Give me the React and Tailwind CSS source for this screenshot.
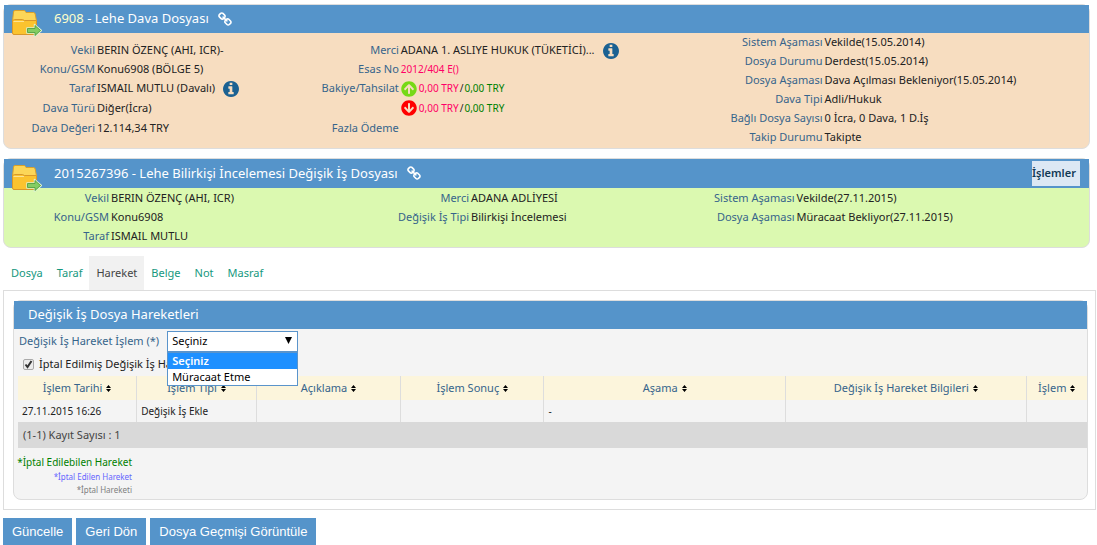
import React, { useState } from "react";
import { FaArrowCircleDown, FaArrowCircleUp } from "react-icons/fa";

const ChainIcon = () => (
  <svg className="size-[15px] shrink-0" viewBox="0 0 1792 1792" fill="currentColor">
    <path d="M1456 1216q0-40-28-68l-208-208q-28-28-68-28-42 0-72 32 3 3 19 18.5t21.5 21.5 15 19 13 25.5 3.5 27.5q0 40-28 68t-68 28q-15 0-27.5-3.5t-25.5-13-19-15-21.5-21.5-18.5-19q-33 31-33 73 0 40 28 68l206 207q27 27 68 27 40 0 68-26l147-146q28-28 28-67zm-703-705q0-40-28-68l-206-207q-28-28-68-28-39 0-68 27l-147 146q-28 28-28 67 0 40 28 68l208 208q27 27 68 27 42 0 72-31-3-3-19-18.5t-21.5-21.5-15-19-13-25.5-3.5-27.5q0-40 28-68t68-28q15 0 27.5 3.5t25.5 13 19 15 21.5 21.5 18.5 19q33-31 33-73zm895 705q0 120-85 203l-147 146q-83 83-203 83-121 0-204-85l-206-207q-83-83-83-203 0-123 88-209l-88-88q-86 88-208 88-120 0-204-84l-208-208q-84-84-84-204t85-203l147-146q83-83 203-83 121 0 204 85l206 207q83 83 83 203 0 123-88 209l88 88q86-88 208-88 120 0 204 84l208 208q84 84 84 204z" />
  </svg>
);

const InfoIcon = () => (
  <svg
    className="size-4 shrink-0 text-[#1b6192]"
    viewBox="128 128 1536 1536"
    fill="currentColor"
  >
    <path d="M1152 1376v-160q0-14-9-23t-23-9h-96v-512q0-14-9-23t-23-9h-320q-14 0-23 9t-9 23v160q0 14 9 23t23 9h96v320h-96q-14 0-23 9t-9 23v160q0 14 9 23t23 9h448q14 0 23-9t9-23zm-128-896v-160q0-14-9-23t-23-9h-192q-14 0-23 9t-9 23v160q0 14 9 23t23 9h192q14 0 23-9t9-23zm640 416q0 209-103 385.5t-279.5 279.5-385.5 103-385.5-103-279.5-279.5-103-385.5 103-385.5 279.5-279.5 385.5-103 385.5 103 279.5 279.5 103 385.5z" />
  </svg>
);

const FolderIcon = () => (
  <svg className="h-7 w-8 shrink-0" viewBox="0 0 32 28">
    <path
      d="M3.500 3q0-1.500 1.500-1.500h9q1 0 1.500 1l.5 1h7.500q1.500 0 1.700 1.500l1.300 7h-24z"
      fill="#fcd658"
      stroke="#d9a02a"
    />
    <path d="M2.500 11.500l2-1h8l2 1h12V24q0 1.500-1.500 1.500H4Q2.500 25.500 2.500 24z" fill="#fbc32f" stroke="#d9982a" />
    <path d="M3.500 12.500h10.500" stroke="#fde293" />
    <path
      d="M17 19h7.500v-3.500l7 6-7 6V24H17z"
      fill="#72c04e"
      stroke="#dcefcf"
      strokeWidth="1.500"
      strokeLinejoin="round"
    />
    <path
      d="M17.500 19.500H25v-3l5.500 5-5.500 5v-3h-7.500z"
      fill="#84cd62"
      stroke="#4b9a38"
      strokeWidth=".8"
      strokeLinejoin="round"
    />
  </svg>
);

const SortIcon = () => (
  <svg className="ml-1 inline-block h-[7px] w-[5px] text-black" viewBox="0 0 5 7" fill="currentColor">
    <path d="M2.500 0L5 3H0zM0 4h5L2.500 7z" />
  </svg>
);

const Amounts = ({ icon }) => (
  <span className="flex items-center gap-px text-[10px]">
    {icon}
    <span className="ml-px text-[#ff0066]">0,00 TRY</span>
    <span>/</span>
    <span className="text-[#008000]">0,00 TRY</span>
  </span>
);

const Column = ({ rows, labelWidth, className = "" }) => (
  <dl className={`whitespace-nowrap ${className}`}>
    {rows.map(([label, value, height = "h-[19px]"], i) => (
      <div key={i} className={`flex items-center gap-0.5 ${height}`}>
        <dt className={`shrink-0 text-right text-[#36648b] ${labelWidth}`}>{label}</dt>
        <dd className="flex items-center">{value}</dd>
      </div>
    ))}
  </dl>
);

const FileCard = ({ number, title, numberColor, height, color, action, children }) => (
  <section className={`mr-[6px] rounded-lg border border-[#ddd] ${color}`}>
    <header className={`flex items-center bg-[#5594ca] pl-[6px] pr-[9px] text-white ${height}`}>
      <div className="h-5">
        <FolderIcon />
      </div>
      <h2 className="ml-3 mr-[9px] text-[13px]">
        <span className={numberColor}>{number}</span> - {title}
      </h2>
      <ChainIcon />
      {action}
    </header>
    {children}
  </section>
);

const caseFile = [
  [
    ["Vekil", "BERIN ÖZENÇ (AHI, ICR)-"],
    ["Konu/GSM", "Konu6908 (BÖLGE 5)"],
    ["Taraf", <>ISMAIL MUTLU (Davalı) <span className="ml-2"><InfoIcon /></span></>],
    ["Dava Türü", "Diğer(İcra)", "h-5"],
    ["Dava Değeri", "12.114,34 TRY", "h-5"]
  ],
  [
    ["Merci", <>ADANA 1. ASLIYE HUKUK (TÜKETİCİ)... <span className="ml-2"><InfoIcon /></span></>],
    ["Esas No", <span className="text-[10px] text-[#ff0066]">2012/404 E()</span>],
    ["Bakiye/Tahsilat", <Amounts icon={<FaArrowCircleUp className="size-4 text-[#76d916]" />} />],
    ["", <Amounts icon={<FaArrowCircleDown className="size-4 text-[#ff0000]" />} />, "h-5"],
    ["Fazla Ödeme", "", "h-5"]
  ],
  [
    ["Sistem Aşaması", "Vekilde(15.05.2014)"],
    ["Dosya Durumu", "Derdest(15.05.2014)"],
    ["Dosya Aşaması", "Dava Açılması Bekleniyor(15.05.2014)"],
    ["Dava Tipi", "Adli/Hukuk"],
    ["Bağlı Dosya Sayısı", "0 İcra, 0 Dava, 1 D.İş"],
    ["Takip Durumu", "Takipte"]
  ]
];

const otherFile = [
  [
    ["Vekil", "BERIN ÖZENÇ (AHI, ICR)"],
    ["Konu/GSM", "Konu6908"],
    ["Taraf", "ISMAIL MUTLU"]
  ],
  [
    ["Merci", "ADANA ADLİYESİ"],
    ["Değişik İş Tipi", "Bilirkişi İncelemesi"]
  ],
  [
    ["Sistem Aşaması", "Vekilde(27.11.2015)"],
    ["Dosya Aşaması", "Müracaat Bekliyor(27.11.2015)"]
  ]
];

const tabs = ["Dosya", "Taraf", "Hareket", "Belge", "Not", "Masraf"];

const columns = [
  ["İşlem Tarihi", "w-[11.1%]", "27.11.2015 16:26"],
  ["İşlem Tipi", "w-[11.2%]", "Değişik İş Ekle"],
  ["Açıklama", "w-[13.5%]", ""],
  ["İşlem Sonuç", "w-[13.4%]", ""],
  ["Aşama", "w-[22.6%]", "-"],
  ["Değişik İş Hareket Bilgileri", "w-[22.5%]", ""],
  ["İşlem", "w-[5.7%]", ""]
];

const options = ["Seçiniz", "Müracaat Etme"];

export default function App() {
  const [tab, setTab] = useState("Hareket");
  const [selected, setSelected] = useState("Seçiniz");
  const [open, setOpen] = useState(true);
  const [showCancelled, setShowCancelled] = useState(true);

  const pick = option => {
    setSelected(option);
    setOpen(false);
  };

  return (
    <main className="bg-white pl-[3px] pr-px pt-1 font-['Noto_Sans','Open_Sans',sans-serif] text-[11px] text-[#222]">
      <FileCard
        number="6908"
        numberColor="text-[#ffffcc]"
        title="Lehe Dava Dosyası"
        height="h-7"
        color="bg-[#f7ddc0]"
      >
        <div className="grid grid-cols-[28%_38.5%_1fr] pb-px">
          <Column rows={caseFile[0]} labelWidth="w-[91px]" className="pt-2" />
          <Column rows={caseFile[1]} labelWidth="w-[91px]" className="pt-2" />
          <Column rows={caseFile[2]} labelWidth="w-[97px]" />
        </div>
      </FileCard>

      <div className="mt-[9px]">
        <FileCard
          number="2015267396"
          numberColor="text-white"
          title="Lehe Bilirkişi İncelemesi Değişik İş Dosyası"
          height="h-[29px]"
          color="bg-[#dbf9b0]"
          action={
            <button className="ml-auto h-[25px] w-12 bg-[#dce8f4] text-left text-[11px] font-semibold text-[#123a55]">
              İşlemler
            </button>
          }
        >
          <div className="grid grid-cols-[33%_30%_1fr] py-px">
            <Column rows={otherFile[0]} labelWidth="w-[105px]" />
            <Column rows={otherFile[1]} labelWidth="w-[107px]" />
            <Column rows={otherFile[2]} labelWidth="w-[107px]" />
          </div>
        </FileCard>
      </div>

      <nav className="mt-2 flex pl-px">
        {tabs.map(name => (
          <button
            key={name}
            onClick={() => setTab(name)}
            className={`h-[34px] px-[7px] ${
              tab === name ? "bg-[#f1f1f1] text-[#444]" : "text-[#16987e]"
            }`}
          >
            {name}
          </button>
        ))}
      </nav>

      <div className="border border-[#ddd] py-[9px] pl-[9px] pr-[7px]">
        <section className="rounded-lg border border-[#ddd] bg-[#f4f4f4]">
          <h2 className="flex h-7 items-center bg-[#5594ca] pl-[14px] text-[13px] text-white">
            Değişik İş Dosya Hareketleri
          </h2>

          <div className="flex items-center gap-2 pl-[5px] pt-0.5">
            <label htmlFor="islem" className="text-[#36648b]">
              Değişik İş Hareket İşlem (*)
            </label>
            <div className="relative">
              <select
                id="islem"
                value={selected}
                onChange={e => pick(e.target.value)}
                className="block h-[21px] w-[131px] appearance-none border border-[#5a94cb] bg-white pl-1 text-[11px] text-black"
              >
                {options.map(option => (
                  <option key={option}>{option}</option>
                ))}
              </select>
              <svg
                className="pointer-events-none absolute right-[6px] top-[6px] h-[7px] w-[7px]"
                viewBox="0 0 7 7"
              >
                <path d="M0 0h7L3.500 7z" />
              </svg>
              {open && (
                <ul className="absolute left-0 top-full z-10 w-full border border-[#5a94cb] bg-white text-[11px] leading-4 text-black">
                  {options.map(option => (
                    <li
                      key={option}
                      onClick={() => pick(option)}
                      className={`cursor-default pl-1 ${
                        option === selected ? "bg-[#1e90ff] font-semibold text-white" : ""
                      }`}
                    >
                      {option}
                    </li>
                  ))}
                </ul>
              )}
            </div>
          </div>

          <label className="flex h-6 items-center gap-[5px] pl-[9px]">
            <span className="relative flex">
              <input
                type="checkbox"
                checked={showCancelled}
                onChange={e => setShowCancelled(e.target.checked)}
                className="size-[11px] appearance-none rounded-[2px] border border-[#aaa] bg-[#ececec]"
              />
              {showCancelled && (
                <svg
                  className="pointer-events-none absolute inset-0 size-[11px]"
                  viewBox="0 0 11 11"
                  fill="none"
                  stroke="#333"
                  strokeWidth="2"
                >
                  <path d="M2.500 5.500l2 2.500 4-6" />
                </svg>
              )}
            </span>
            İptal Edilmiş Değişik İş Hareketleri
          </label>

          <div className="pl-1">
            <table className="w-full table-fixed border-collapse">
              <thead>
                <tr className="h-6 bg-[#fcf5dc] text-[#36648b]">
                  {columns.map(([name, width]) => (
                    <th
                      key={name}
                      className={`whitespace-nowrap border-l border-[#ddd] p-0 font-normal first:border-l-0 ${width}`}
                    >
                      {name}
                      <SortIcon />
                    </th>
                  ))}
                </tr>
              </thead>
              <tbody>
                <tr className="h-[22px] text-[10px]">
                  {columns.map(([name, , value]) => (
                    <td
                      key={name}
                      className="border-l border-[#ddd] p-0 pl-1 first:border-l-0"
                    >
                      {value}
                    </td>
                  ))}
                </tr>
              </tbody>
              <tfoot>
                <tr className="h-[26px] bg-[#d9d9d9] text-[#444]">
                  <td colSpan={columns.length} className="p-0 pl-[5px]">
                    (1-1) Kayıt Sayısı : 1
                  </td>
                </tr>
              </tfoot>
            </table>

            <div className="flex w-[114px] flex-col items-end whitespace-nowrap pb-[3px] pt-1.5">
              <p className="text-[10px] leading-4 text-[#008000]">*İptal Edilebilen Hareket</p>
              <p className="text-[8px] leading-[13px] text-[#6666ff]">*İptal Edilen Hareket</p>
              <p className="text-[8px] leading-[13px] text-[#808080]">*İptal Hareketi</p>
            </div>
          </div>
        </section>
      </div>

      <div className="mt-2 flex gap-1 font-['Liberation_Sans',sans-serif] text-[13px] text-white">
        <button className="h-7 bg-[#5594ca] px-[9px]">Güncelle</button>
        <button className="h-7 bg-[#5594ca] px-[9px]">Geri Dön</button>
        <button className="h-7 bg-[#5594ca] px-[9px]">Dosya Geçmişi Görüntüle</button>
      </div>
    </main>
  );
}
